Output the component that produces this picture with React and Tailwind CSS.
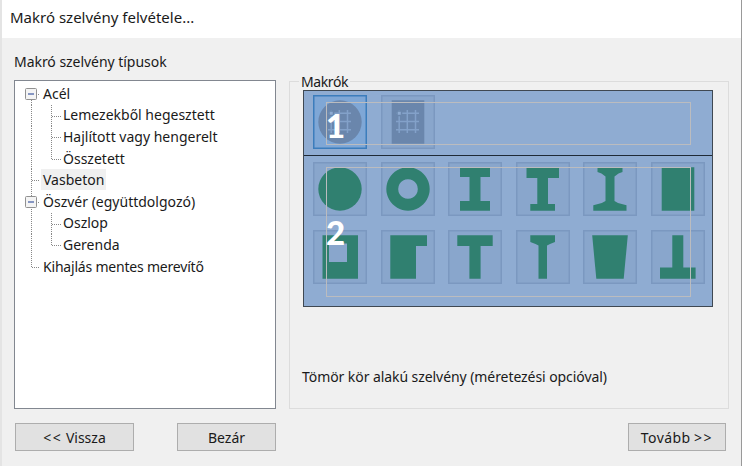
const FONT = "font-['Noto_Sans','Open_Sans',sans-serif]";

const GREEN = '#308070';
const TILES = [
  [
    <circle cx="27" cy="27" r="21.7" />,
    <path fillRule="evenodd" d="M27 5.3a21.7 21.7 0 1 0 .01 0zM27 17.2a9.8 9.8 0 1 1-.01 0z" />,
    <path d="M12 5.3h30V15h-9.5v24H42v9.7H12V39h9.5V15H12z" />,
    <path d="M10.5 5.3H43V16H32v26h7v6.7H14.3V42h7V16H10.5z" />,
    <path d="M14.5 5.3h25V10l-4 1.5-4 3V39l3.5 2 8.5 2.3v5.4H10.3v-5.4l8.5-2.3 3.7-2V14.5l-4-3-4-1.5z" />,
    <path d="M10.7 5.3h32.6v43.4H10.7z" />,
  ],
  [
    <path fillRule="evenodd" d="M9.5 5.3H45v43.4H9.5zM16 13.5V32h18V13.5z" />,
    <path d="M9.3 5.3H46V16H35v32.7H9.3z" />,
    <path d="M9.3 5.3h35.4V16H32.6v32.7H21.4V16H9.3z" />,
    <path d="M14.3 5.3H39V12l-5 2-3 1.5v33.2h-8.5V15.5l-3-1.5-5.2-2z" />,
    <path d="M9.2 5.3H44.8L40.7 48.7H13.3z" />,
    <path d="M21.3 5.3h11v32.2h12.3v11.2H9V37.5h12.3z" />,
  ],
];

const NODES = [
  { text: 'Acél', level: 0, box: true },
  { text: 'Lemezekből hegesztett', level: 1 },
  { text: 'Hajlított vagy hengerelt', level: 1 },
  { text: 'Összetett', level: 1, last: true },
  { text: 'Vasbeton', level: 0, selected: true },
  { text: 'Öszvér (együttdolgozó)', level: 0, box: true },
  { text: 'Oszlop', level: 1 },
  { text: 'Gerenda', level: 1, last: true },
  { text: 'Kihajlás mentes merevítő', level: 0, last: true, tracking: 'tracking-[-0.2px]' },
];

function TreeRow({ node, first }) {
  const deep = node.level === 1;
  const end = node.last && !deep;
  return (
    <div className="flex h-[21.6px] items-center">
      <svg className={deep ? 'h-full w-[46px] shrink-0' : 'h-full w-[26px] shrink-0'} fill="none" stroke="#888" strokeDasharray="1 1">
        {deep ? (
          <path d={`M16.5 0V22M36.5 0V${node.last ? 11 : 22}M37 11.5H46`} />
        ) : (
          <path d={`M16.5 ${first ? 11 : 0}V${end ? 11 : 22}M17 11.5H25`} />
        )}
        {node.box && (
          <g strokeDasharray="none">
            <rect x="10.5" y="5.5" width="11" height="11" rx="1" fill="#f4f4f4" stroke="#919191" />
            <path d="M13 11h6" stroke="#4b63a7" strokeWidth="1.3" />
          </g>
        )}
      </svg>
      <span className={`-mt-px px-[2px] leading-[21px] ${node.tracking || ''} ${node.selected ? 'bg-[#f0f0f0]' : ''}`}>{node.text}</span>
    </div>
  );
}

function Tile({ children, active }) {
  return (
    <svg viewBox="0 0 54 54" className="size-[54px] shrink-0" fill={GREEN}>
      <rect x=".75" y=".75" width="52.5" height="52.5" fill={active ? '#7fa7d6' : '#89a6cc'} stroke={active ? '#3c7dbc' : '#7b98c0'} strokeWidth="1.5" />
      {children}
    </svg>
  );
}

function Grid() {
  return (
    <g stroke="#83a1c9" fill="#8facd2" strokeWidth="1.5">
      <path fill="none" d="M18.2 15v23M26.3 15v23M34.5 15v23M15 18.2h23M15 26.5h23M15 34.7h23" />
      <rect x="16" y="16" width="4.5" height="4.5" stroke="#6a86ac" />
    </g>
  );
}

function Frame({ children, className }) {
  return (
    <div className={`absolute left-[22px] flex w-[365px] items-center border border-[#bbbcbf] font-['Lato',sans-serif] text-[33px] font-black text-white ${className}`}>
      <span className="-ml-px">{children}</span>
    </div>
  );
}

function Button({ children, className }) {
  return <button className={`h-[28px] border border-[#adadad] bg-[#e1e1e1] ${className}`}>{children}</button>;
}

export default function App() {
  return (
    <div className={`flex h-[466px] w-[742px] flex-col overflow-hidden border-r border-l-2 border-l-[#e4e4e4] border-r-[#999] bg-[#f0f0f0] text-[14px] text-[#1a1a1a] ${FONT}`}>
      <header className="flex h-[38px] shrink-0 items-center bg-white pb-[4px] pl-[8px] text-[15px]">
        <span>Makró szelvény felvétele...</span>
      </header>
      <main className="flex h-[371px] shrink-0 pl-[12px]">
        <section className="w-[262px]">
          <h2 className="h-[42px] pt-[13px] leading-[22px] tracking-[-0.04px]">Makró szelvény típusok</h2>
          <div className="h-[329px] border border-[#828790] bg-white pt-[2px]">
            {NODES.map((n, i) => <TreeRow key={n.text} node={n} first={i === 0} />)}
          </div>
        </section>
        <fieldset className="mt-[33px] ml-[13px] h-[338px] w-[440px] border border-[#dcdcdc] pl-[13px]">
          <legend className="-ml-[4px] h-[20px] px-[2px] leading-[22px] tracking-[-0.4px]">Makrók</legend>
          <div className="relative -mt-px h-[217px] w-[410px] border border-[#3f4852] bg-[#8facd2]">
            <div className="flex h-[65px] gap-[13.5px] border-b border-[#1f2a36] pt-[4px] pl-[9px]">
              <Tile active><circle cx="27" cy="27" r="21.7" fill="#6a86ac" /><Grid /></Tile>
              <Tile><path d="M10.7 5.3h32.6v43.4H10.7z" fill="#6a86ac" /><Grid /></Tile>
            </div>
            <div className="flex flex-col gap-[13.5px] pt-[6px] pl-[9px]">
              {TILES.map((row, r) => (
                <div key={r} className="flex gap-[13.5px]">
                  {row.map((shape, i) => <Tile key={i}>{shape}</Tile>)}
                </div>
              ))}
            </div>
            <Frame className="top-[11px] h-[43px] pt-[4px]">1</Frame>
            <Frame className="top-[76px] h-[130px] pt-px">2</Frame>
          </div>
          <p className="mt-[59px] -ml-px leading-[22px] tracking-[-0.07px]">Tömör kör alakú szelvény (méretezési opcióval)</p>
        </fieldset>
      </main>
      <footer className="flex pt-[14px] pl-[13px]">
        <Button className="w-[119px]"><span className="tracking-[1.5px]">&lt;&lt;</span> Vissza</Button>
        <Button className="ml-[43px] w-[99px]">Bezár</Button>
        <Button className="ml-[352px] w-[98px]"><span className="tracking-[0.4px]">Tovább</span> <span className="tracking-[1.5px]">&gt;&gt;</span></Button>
      </footer>
    </div>
  );
}
